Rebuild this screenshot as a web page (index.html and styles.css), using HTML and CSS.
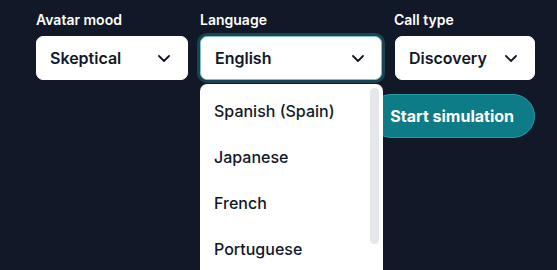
FILE: index.html
```html
<!DOCTYPE html>
<html lang="en">
<head>
  <meta charset="UTF-8" />
  <meta name="viewport" content="width=device-width, initial-scale=1.0"/>
  <title>Simulation setup</title>
  <link rel="stylesheet" href="styles.css">
</head>
<body>
  <div class="setup">
    <div class="fields">
      <div class="field">
        <label class="field-label">Avatar mood</label>
        <div class="select select-mood">
          <span>Skeptical</span>
          <svg class="chevron" width="12" height="7" viewBox="0 0 12 7"><path d="M1 1l5 5 5-5" fill="none" stroke="#111827" stroke-width="1.8" stroke-linecap="round" stroke-linejoin="round"/></svg>
        </div>
      </div>

      <div class="field field-open">
        <label class="field-label">Language</label>
        <div class="select select-lang is-focused">
          <span>English</span>
          <svg class="chevron" width="12" height="7" viewBox="0 0 12 7"><path d="M1 1l5 5 5-5" fill="none" stroke="#111827" stroke-width="1.8" stroke-linecap="round" stroke-linejoin="round"/></svg>
        </div>
        <ul class="menu">
          <li>Spanish (Spain)</li>
          <li>Japanese</li>
          <li>French</li>
          <li>Portuguese</li>
        </ul>
      </div>

      <div class="field">
        <label class="field-label">Call type</label>
        <div class="select select-call">
          <span>Discovery</span>
          <svg class="chevron" width="12" height="7" viewBox="0 0 12 7"><path d="M1 1l5 5 5-5" fill="none" stroke="#111827" stroke-width="1.8" stroke-linecap="round" stroke-linejoin="round"/></svg>
        </div>
      </div>
    </div>

    <div class="actions">
      <button class="start-btn">Start simulation</button>
    </div>
  </div>
</body>
</html>
```

FILE: styles.css
```css
html, body {
  margin: 0;
  height: 100%;
  overflow: hidden;
}
body {
  font-family: Inter, "Noto Sans", sans-serif;
  background-color: #111827;
  color: #111827;
}
.setup {
  width: 499px;
  padding: 11px 0 0 36px;
}
.fields {
  display: flex;
  gap: 12px;
}
.field {
  display: flex;
  flex-direction: column;
  gap: 7px;
}
.field-open {
  position: relative;
}
.field-label {
  color: #fff;
  font-size: 14px;
  font-weight: 600;
  line-height: 18px;
}
.select {
  box-sizing: border-box;
  height: 44px;
  display: flex;
  align-items: center;
  justify-content: space-between;
  padding: 0 17px 0 13px;
  background: #fff;
  border: 1px solid #fff;
  border-radius: 7px;
  font-size: 16px;
  font-weight: 600;
}
.select-mood { width: 152px; }
.select-lang { width: 182px; padding-left: 14px; }
.select-call { width: 140px; margin-left: 1px; }
.is-focused {
  border-color: #7cc3c7;
  box-shadow: 0 0 0 3px rgba(38, 112, 126, 0.5);
}
.chevron {
  flex: none;
}
.menu {
  position: absolute;
  top: 73px;
  left: 0;
  width: 183px;
  height: 200px;
  box-sizing: border-box;
  margin: 0;
  padding: 4px 0 0;
  list-style: none;
  background: #fff;
  border-radius: 7px;
  overflow: hidden;
  z-index: 2;
}
.menu::after {
  content: "";
  position: absolute;
  top: 4px;
  right: 4px;
  width: 9px;
  height: 156px;
  border-radius: 5px;
  background: #e5e7eb;
}
.menu li {
  height: 46px;
  display: flex;
  align-items: center;
  padding: 0 14px;
  font-size: 16px;
  font-weight: 500;
  color: #111827;
}
.actions {
  display: flex;
  justify-content: flex-end;
  margin-top: 14px;
}
.start-btn {
  height: 44px;
  padding: 0 20px;
  border: 1px solid #2b9aa2;
  border-radius: 22px;
  background-color: #0e7c86;
  color: #fff;
  font-family: inherit;
  font-size: 16px;
  font-weight: 700;
  cursor: pointer;
}
```
